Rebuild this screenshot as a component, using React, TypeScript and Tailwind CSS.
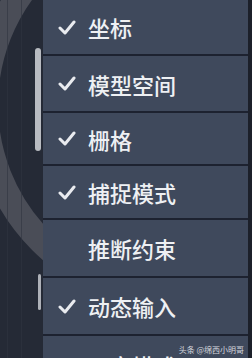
import React from "react";

const rows: { label: string; checked: boolean; h: string }[] = [
  { label: "坐标", checked: true, h: "h-[56px]" },
  { label: "模型空间", checked: true, h: "h-[57px]" },
  { label: "栅格", checked: true, h: "h-[53px]" },
  { label: "捕捉模式", checked: true, h: "h-[54px]" },
  { label: "推断约束", checked: false, h: "h-[58px]" },
  { label: "动态输入", checked: true, h: "h-[58px]" },
  { label: "正交模式", checked: false, h: "h-[58px]" },
];

function Check() {
  return (
    <svg width="18" height="15" viewBox="0 0 18 15" className="shrink-0">
      <polyline
        points="2,8 7,13 16,2"
        fill="none"
        stroke="#e9ebef"
        strokeWidth="3"
        strokeLinecap="round"
        strokeLinejoin="round"
      />
    </svg>
  );
}

export default function App() {
  return (
    <div
      className="w-[252px] h-[358px] overflow-hidden flex bg-[#232833]"
      style={{ fontFamily: '"Noto Sans CJK SC", "Noto Sans", sans-serif' }}
    >
      <div className="relative w-[43px] h-full shrink-0 overflow-hidden bg-[#252a36]">
        <div className="absolute left-[-28px] top-[-100px] w-[420px] h-[410px] rounded-full border-[26px] border-[#4a4d57]" />
        <div className="absolute inset-0 flex justify-around opacity-60">
          <div className="w-px h-full bg-[#303541]" />
          <div className="w-px h-full bg-[#303541]" />
          <div className="w-px h-full bg-transparent" />
        </div>
        <div className="absolute left-[35px] top-[48px] w-[6px] h-[103px] rounded-sm bg-[#b8bbc1]" />
        <div className="absolute left-[38px] top-[274px] w-[3px] h-[36px] rounded-full bg-[#aeb1b8]" />
      </div>
      <div className="relative flex-1 flex flex-col bg-[#3f495c] border-r-[4px] border-[#1c202a]">
        {rows.map((r, i) => (
          <div
            key={i}
            className={`${r.h} shrink-0 flex items-center pl-[15px] gap-[12px] ${i < rows.length - 1 ? "border-b-2 border-[#1d2230]" : ""}`}
          >
            <div className="w-[18px] flex items-center">{r.checked ? <Check /> : null}</div>
            <span className="text-[22px] leading-none text-[#eef0f3] font-medium">{r.label}</span>
          </div>
        ))}
        <div className="absolute right-[4px] bottom-[4px] text-[8px] leading-none text-[#d5d8de]">
          头条 @绵西小明哥
        </div>
      </div>
    </div>
  );
}
